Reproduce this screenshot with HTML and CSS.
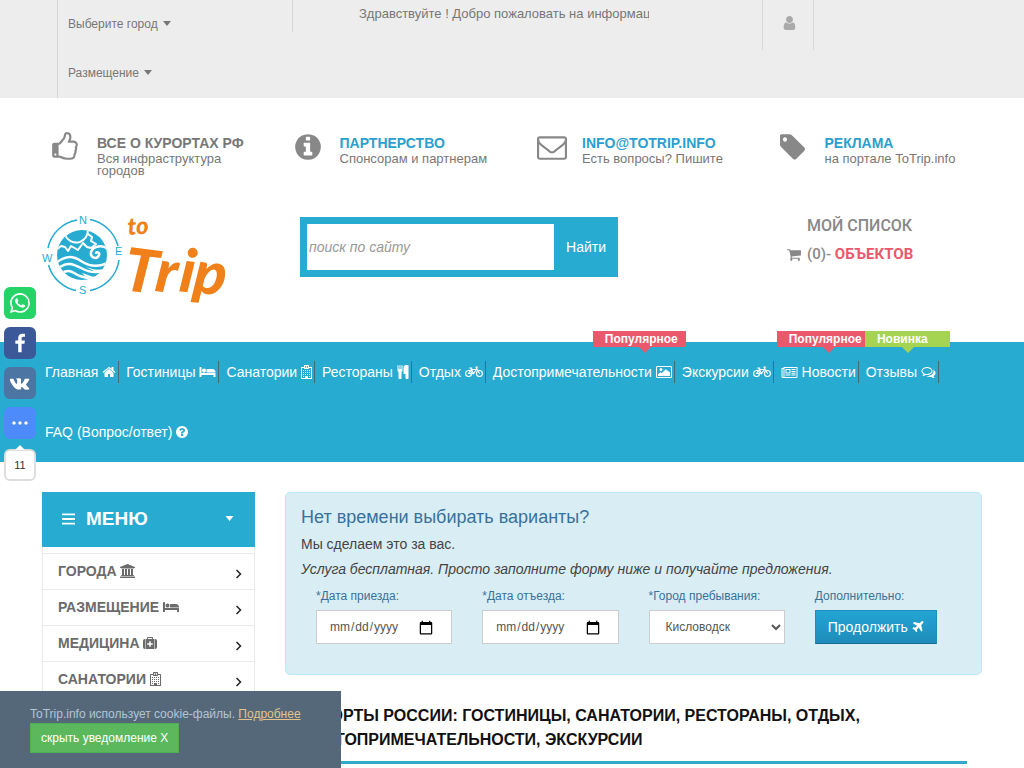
FILE: index.html
```html
<!DOCTYPE html>
<html lang="ru">
<head>
<meta charset="utf-8">
<title>ToTrip.info</title>
<link rel="stylesheet" href="styles.css">
</head>
<body>
<svg class="sprite" aria-hidden="true">
  <symbol id="home" viewBox="64 0 1664 1792"><path d="M1472 992v480q0 26-19 45t-45 19h-384v-384h-256v384h-384q-26 0-45-19t-19-45v-480q0-1 .5-3t.5-3l575-474 575 474q1 2 1 6zm223-69l-62 74q-8 9-21 11h-3q-13 0-21-7l-692-577-692 577q-12 8-24 7-13-2-21-11l-62-74q-8-10-7-23.5t11-21.5l719-599q32-26 76-26t76 26l244 204v-195q0-14 9-23t23-9h192q14 0 23 9t9 23v408l219 182q10 8 11 21.5t-7 23.5z"/></symbol>
  <symbol id="bed" viewBox="0 0 2048 1792"><path d="M256 1024h1728q26 0 45 19t19 45v448h-256v-256h-1536v256h-256v-1216q0-26 19-45t45-19h128q26 0 45 19t19 45v704zm576-320q0-106-75-181t-181-75-181 75-75 181 75 181 181 75 181-75 75-181zm1216 256v-64q0-159-112.5-271.5t-271.5-112.5h-704q-26 0-45 19t-19 45v384h1152z"/></symbol>
  <symbol id="hospital" viewBox="0 0 1408 1792"><path fill-rule="evenodd" d="M64 256h320V64q0-64 64-64h512q64 0 64 64v192h320q64 0 64 64v1408q0 64-64 64H64q-64 0-64-64V320q0-64 64-64zm64 128v1280h384v-256h384v256h384V384h-256v32q0 96-96 96H480q-96 0-96-96v-32zM512 128v256h384V128zM640 160h128v64h64v96h-64v64H640v-64h-64v-96h64zM256 640h128v128H256zm256 0h128v128H512zm256 0h128v128H768zm256 0h128v128h-128zM256 896h128v128H256zm256 0h128v128H512zm256 0h128v128H768zm256 0h128v128h-128zM256 1152h128v128H256zm256 0h128v128H512zm256 0h128v128H768zm256 0h128v128h-128zM256 1408h128v128H256zm768 0h128v128h-128z"/></symbol>
  <symbol id="cutlery" viewBox="192 0 1408 1792"><path d="M832 64v640q0 61-35.500 111t-92.500 70v779q0 52-38 90t-90 38h-128q-52 0-90-38t-38-90v-779q-57-20-92.500-70t-35.500-111v-640q0-26 19-45t45-19 45 19 19 45v416q0 26 19 45t45 19 45-19 19-45v-416q0-26 19-45t45-19 45 19 19 45v416q0 26 19 45t45 19 45-19 19-45v-416q0-26 19-45t45-19 45 19 19 45zm768 0v1600q0 52-38 90t-90 38h-128q-52 0-90-38t-38-90v-512h-224q-13 0-22.500-9.500t-9.500-22.500v-800q0-132 94-226t226-94h256q26 0 45 19t19 45z"/></symbol>
  <symbol id="bicycle" viewBox="0 0 2304 1792"><g fill="none" stroke="currentColor" stroke-width="150" stroke-linejoin="round" stroke-linecap="round"><circle cx="460" cy="1088" r="380"/><circle cx="1844" cy="1088" r="380"/><path d="M448 1088L800 576H1480L1060 1088ZM1060 1088L740 384M600 384H870M1856 1088L1400 256H1630"/></g><circle cx="1060" cy="1088" r="130"/></symbol>
  <symbol id="image" viewBox="0 0 2048 1792"><path fill-rule="evenodd" d="M160 128h1728q160 0 160 160v1216q0 160-160 160H160Q0 1664 0 1504V288q0-160 160-160zm0 128q-32 0-32 32v1216q0 32 32 32h1728q32 0 32-32V288q0-32-32-32zM832 576a192 192 0 1 1-384 0a192 192 0 1 1 384 0zM1792 960v448H256v-192l320-320 160 160 512-512z"/></symbol>
  <symbol id="news" viewBox="0 0 2048 1792"><path fill-rule="evenodd" d="M256 256h1792v1216q0 192-192 192H192Q0 1664 0 1472V384h256zM128 512v960q0 64 64 64t64-64V512zm256-128v1088q0 34-10 64h1482q64 0 64-64V384zM512 512h640v576H512zm128 128v320h384V640zM512 1216h640v128H512zm768-704h512v128h-512zm0 256h512v128h-512zm0 224h512v128h-512zm0 224h512v128h-512z"/></symbol>
  <symbol id="comments" viewBox="0 0 1792 1792"><path d="M704 384q-153 0-286 52t-211.500 141-78.500 191q0 82 53 158t149 132l97 56-35 84q34-20 62-39l44-31 53 10q78 14 153 14 153 0 286-52t211.500-141 78.500-191-78.500-191-211.500-141-286-52zm0-128q191 0 353.500 68.500t256.500 186.500 94 257-94 257-256.500 186.500-353.500 68.500q-86 0-176-16-124 88-278 128-36 9-86 16h-3q-11 0-20.500-8t-11.500-21q-1-3-1-6.500t.5-6.500 2-6l2.500-5 3.500-5.500 4-5 4.500-5 4-4.500q5-6 23-25t26-29.500 22.500-29 25-38.500 20.500-44q-124-72-195-177t-71-224q0-139 94-257t256.500-186.500 353.500-68.500zm822 1169q10 24 20.500 44t25 38.500 22.500 29 26 29.500 23 25q1 1 4 4.500t4.500 5 4 5 3.500 5.500l2.500 5 2 6 .5 6.500-1 6.500q-3 14-13 22t-22 7q-50-7-86-16-154-40-278-128-90 16-176 16-271 0-472-132 58 4 88 4 161 0 309-45t264-129q125-92 192-212t67-254q0-77-23-152 129 71 204 178t75 230q0 120-71 224.500t-195 176.500z"/></symbol>
  <symbol id="question" viewBox="128 0 1536 1792"><path d="M1024 1376v-192q0-14-9-23t-23-9h-192q-14 0-23 9t-9 23v192q0 14 9 23t23 9h192q14 0 23-9t9-23zm256-672q0-88-55.500-163t-138.500-116-170-41q-243 0-371 213-15 24 8 42l132 100q7 6 19 6 16 0 25-12 53-68 86-92 34-24 86-24 48 0 85.500 26t37.500 59q0 38-20 61t-68 45q-63 28-115.500 86.500t-52.500 125.500v36q0 14 9 23t23 9h192q14 0 23-9t9-23q0-19 21.500-49.500t54.500-49.500q32-18 49-28.500t46-35 44.500-48 28-60.500 12.500-81zm384 192q0 209-103 385.500t-279.500 279.500-385.500 103-385.500-103-279.500-279.500-103-385.500 103-385.500 279.500-279.500 385.500-103 385.500 103 279.500 279.500 103 385.500z"/></symbol>
  <symbol id="info" viewBox="128 0 1536 1792"><path d="M1152 1376v-160q0-14-9-23t-23-9h-96v-512q0-14-9-23t-23-9h-320q-14 0-23 9t-9 23v160q0 14 9 23t23 9h96v320h-96q-14 0-23 9t-9 23v160q0 14 9 23t23 9h448q14 0 23-9t9-23zm-128-896v-160q0-14-9-23t-23-9h-192q-14 0-23 9t-9 23v160q0 14 9 23t23 9h192q14 0 23-9t9-23zm640 416q0 209-103 385.500t-279.500 279.500-385.500 103-385.500-103-279.500-279.500-103-385.500 103-385.500 279.500-279.500 385.500-103 385.500 103 279.500 279.500 103 385.500z"/></symbol>
  <symbol id="thumb" viewBox="128 0 1536 1792"><path d="M384 1344q0-26-19-45t-45-19-45 19-19 45 19 45 45 19 45-19 19-45zm1152-576q0-51-39-89.500t-89-38.500h-352q0-58 48-159.500t48-160.500q0-98-32-145t-128-47q-26 26-38 85t-30.500 125.500-59.500 109.500q-22 23-77 91-4 5-23 30t-31.500 41-34.500 42.500-40 44-38.500 35.500-40 27-35.500 9h-32v640h32q13 0 31.500 3t33 6.500 38 11 35 11.500 35.500 12.500 29 10.500q211 73 342 73h121q192 0 192-167 0-26-5-56 30-16 47.500-52.500t17.500-73.500-18-69q53-50 53-119 0-25-10-55.500t-25-47.500q32-1 53.500-47t21.500-81zm128-1q0 89-49 163 9 33 9 69 0 77-38 144 3 21 3 43 0 101-60 178 1 139-85 219.500t-227 80.500h-129q-96 0-189.500-22.500t-216.500-65.500q-116-40-138-40h-288q-53 0-90.500-37.500t-37.500-90.500v-640q0-53 37.500-90.500t90.500-37.500h274q36-24 137-155 58-75 107-128 24-25 35.500-85.500t30.500-126.500 62-108q39-37 90-37 84 0 151 32.500t102 101.500 35 186q0 93-48 192h176q104 0 180 76t76 179z"/></symbol>
  <symbol id="envelope" viewBox="0 0 1792 1792"><path d="M1664 1504v-768q-32 36-69 66-268 206-426 338-51 43-83 67t-86.500 48.500-102.500 24.500h-2q-48 0-102.500-24.500t-86.500-48.500-83-67q-158-132-426-338-37-30-69-66v768q0 13 9.500 22.500t22.500 9.500h1472q13 0 22.500-9.500t9.500-22.500zm0-1051v-24.500l-.5-13-3-12.500-5.500-9-9-7.500-14-2.500h-1472q-13 0-22.500 9.500t-9.500 22.500q0 168 147 284 193 152 401 317 6 5 35 29.500t46 37.500 44.500 31.500 50.500 27.500 43 9h2q20 0 43-9t50.500-27.500 44.500-31.500 46-37.500 35-29.500q208-165 401-317 54-43 100.500-115.500t46.500-131.500zm128-37v1088q0 66-47 113t-113 47h-1472q-66 0-113-47t-47-113v-1088q0-66 47-113t113-47h1472q66 0 113 47t47 113z"/></symbol>
  <symbol id="tag" viewBox="192 0 1472 1792"><path d="M576 448q0-53-37.500-90.500t-90.500-37.500-90.500 37.500-37.500 90.500 37.500 90.500 90.500 37.500 90.500-37.500 37.500-90.500zm1067 576q0 53-37 90l-491 492q-39 37-91 37-53 0-90-37l-715-716q-38-37-64.500-101t-26.500-117v-416q0-52 38-90t90-38h416q53 0 117 26.500t102 64.500l715 714q37 39 37 91z"/></symbol>
  <symbol id="user" viewBox="256 128 1280 1536"><path d="M1536 1399q0 109-62.500 187t-150.500 78h-854q-88 0-150.500-78t-62.500-187q0-85 8.500-160.500t31.500-152 58.500-131 94-89 134.500-34.500q131 128 313 128t313-128q76 0 134.500 34.500t94 89 58.500 131 31.500 152 8.500 160.500zm-256-887q0 159-112.500 271.500t-271.500 112.500-271.500-112.500-112.500-271.500 112.500-271.500 271.500-112.500 271.500 112.500 112.500 271.500z"/></symbol>
  <symbol id="cart" viewBox="64 0 1664 1792"><path d="M704 1536q0 52-38 90t-90 38-90-38-38-90 38-90 90-38 90 38 38 90zm896 0q0 52-38 90t-90 38-90-38-38-90 38-90 90-38 90 38 38 90zm128-1088v512q0 24-16.500 42.500t-40.500 21.500l-1044 122q13 60 13 70 0 16-24 64h920q26 0 45 19t19 45-19 45-45 19h-1024q-26 0-45-19t-19-45q0-11 8-31.500t16-36 21.500-40 15.500-29.500l-177-823h-204q-26 0-45-19t-19-45 19-45 45-19h256q16 0 28.500 6.500t19.500 15.500 13 24.500 8 26 5.500 29.500 4.500 26h1201q26 0 45 19t19 45z"/></symbol>
  <symbol id="plane" viewBox="160 0 1472 1792"><path d="M1568 160q44 52 12 148t-108 172l-161 161 160 696q5 19-12 33l-128 96q-7 6-19 6-4 0-7-1-15-3-21-16l-279-508-259 259 53 194q5 17-8 31l-96 96q-9 9-23 9h-2q-15-2-24-13l-189-252-252-189q-11-7-13-23-1-13 9-25l96-97q9-9 23-9 6 0 8 1l194 53 259-259-508-279q-14-8-17-24-2-16 9-27l128-128q14-13 30-8l665 159 160-160q76-76 172-108t148 12z"/></symbol>
  <symbol id="bank" viewBox="0 0 1920 1792"><path d="M960 0l960 384v128h-128q0 26-20.500 45t-48.500 19h-1526q-28 0-48.500-19t-20.500-45h-128v-128zm-704 640h256v768h128v-768h256v768h128v-768h256v768h128v-768h256v768h59q28 0 48.500 19t20.500 45v64h-1664v-64q0-26 20.500-45t48.500-19h59v-768zm1595 960q28 0 48.500 19t20.500 45v128h-1920v-128q0-26 20.500-45t48.500-19h1782z"/></symbol>
  <symbol id="medkit" viewBox="0 0 1792 1792"><path fill-rule="evenodd" d="M512 384V224q0-96 96-96h576q96 0 96 96v160h128v1280H384V384zm128 0h512V256H640zm160 288v256H544v192h256v256h192v-256h256V928H992V672zM320 384v1280h-96q-224 0-224-224V608q0-224 224-224zM1792 608v832q0 224-224 224h-96V384h96q224 0 224 224z"/></symbol>
  <symbol id="bars" viewBox="0 0 14 12"><path d="M0 0h14v2H0zM0 5h14v2H0zM0 10h14v2H0z"/></symbol>
  <symbol id="caret" viewBox="0 0 8 5"><path d="M0 0h8L4 5z"/></symbol>
  <symbol id="chevron" viewBox="0 0 6 10"><path fill="none" stroke="currentColor" stroke-width="1.500" d="M1 1l4 4-4 4"/></symbol>
  <symbol id="whatsapp" viewBox="0 0 16 16"><path d="M13.601 2.326A7.850 7.850 0 0 0 7.994 0C3.627 0 .068 3.558.064 7.926c0 1.399.366 2.760 1.057 3.965L0 16l4.204-1.102a7.900 7.900 0 0 0 3.790.965h.004c4.368 0 7.926-3.558 7.930-7.930A7.900 7.900 0 0 0 13.600 2.326zM7.994 14.521a6.600 6.600 0 0 1-3.356-.920l-.240-.144-2.494.654.666-2.433-.156-.251a6.560 6.560 0 0 1-1.007-3.505c0-3.626 2.957-6.584 6.591-6.584a6.560 6.560 0 0 1 4.660 1.931 6.560 6.560 0 0 1 1.928 4.660c-.004 3.639-2.961 6.592-6.592 6.592m3.615-4.934c-.197-.099-1.170-.578-1.353-.646-.182-.065-.315-.099-.445.099-.133.197-.513.646-.627.775-.114.133-.232.148-.430.050-.197-.100-.836-.308-1.592-.985-.590-.525-.985-1.175-1.103-1.372-.114-.198-.011-.304.088-.403.087-.088.197-.232.296-.346.100-.114.133-.198.198-.330.065-.134.034-.248-.015-.347-.050-.099-.445-1.076-.612-1.470-.160-.389-.323-.335-.445-.340-.114-.007-.247-.007-.380-.007a.730.730 0 0 0-.529.247c-.182.198-.691.677-.691 1.654s.710 1.916.810 2.049c.098.133 1.394 2.132 3.383 2.992.470.205.840.326 1.129.418.475.152.904.129 1.246.080.380-.058 1.171-.480 1.338-.943.164-.464.164-.860.114-.943-.049-.084-.182-.133-.380-.232"/></symbol>
  <symbol id="facebook" viewBox="0 0 1792 1664"><path d="M1343 12v264h-157q-86 0-116 36t-30 108v189h293l-39 296h-254v759h-306v-759h-255v-296h255v-218q0-186 104-288.500t277-102.500q147 0 228 12z"/></symbol>
  <symbol id="vk" viewBox="0 0 1920 1792"><path d="M1853 520q23 64-150 294-24 32-65 85-78 100-90 131-17 41 14 81 17 21 81 82h1l1 1 1 1 2 2q141 131 191 221 3 5 6.500 12.500t7 26.500-.5 34-25 27.500-59 12.500l-256 4q-24 5-56-5t-52-22l-20-12q-30-21-70-64t-68.500-77.500-61-58-56.500-15.500q-3 1-8 3.500t-17 14.500-21.500 29.500-17 52-6.500 77.500q0 15-3.500 27.500t-7.500 18.500l-4 5q-18 19-53 22h-115q-71 4-146-16.500t-131.500-53-103-66-70.500-57.500l-25-24q-10-10-27.500-30t-71.500-91-106-151-122.500-211-130.500-272q-6-16-6-27t3-16l4-6q15-19 57-19l274-2q12 2 23 6.500t16 8.500l5 3q16 11 24 32 20 50 46 103.500t41 81.500l16 29q29 60 56 104t48.500 68.500 41.500 38.500 34 14 27-5q2-1 5-5t12-22 13.500-47 9.500-81 0-125q-2-40-9-73t-14-46l-6-12q-25-34-85-43-13-2 5-24 16-19 38-30 53-26 239-24 82 1 135 13 20 5 33.500 13.500t20.500 24 10.500 32 3.500 45.500-1 55-2.500 70.500-1.500 82.500q0 11-1 42t-.5 48 3.500 40.500 11.500 39 22.500 24.500q8 2 17 4t26-11 38-34.500 52-67 68-107.500q60-104 107-225 4-10 10-17.500t11-10.500l4-3 5-2.500 13-3 20-.5 288-2q39-5 64 2.500t31 16.500z"/></symbol>
  <symbol id="dots" viewBox="0 0 16 4"><circle cx="2" cy="2" r="1.700"/><circle cx="8" cy="2" r="1.700"/><circle cx="14" cy="2" r="1.700"/></symbol>
</svg>

<div class="topbar">
  <div class="container topbar-row">
    <ul class="top-links">
      <li><a href="#">Выберите город <svg class="caret"><use href="#caret"/></svg></a></li>
      <li><a href="#">Размещение <svg class="caret"><use href="#caret"/></svg></a></li>
    </ul>
    <div class="ticker"><p>Здравствуйте ! Добро пожаловать на информационный портал</p></div>
    <a class="account" href="#" aria-label="Личный кабинет"><svg><use href="#user"/></svg></a>
  </div>
</div>

<header class="container">
  <div class="features">
    <div class="feature"><span class="feature-icon"><svg class="sq"><use href="#thumb"/></svg></span><div><h3>ВСЕ О КУРОРТАХ РФ</h3><p>Вся инфраструктура городов</p></div></div>
    <div class="feature"><span class="feature-icon"><svg class="sq"><use href="#info"/></svg></span><div><h3><a href="#">ПАРТНЕРСТВО</a></h3><p>Спонсорам и партнерам</p></div></div>
    <div class="feature"><span class="feature-icon"><svg class="wide"><use href="#envelope"/></svg></span><div><h3><a href="#">INFO@TOTRIP.INFO</a></h3><p>Есть вопросы? Пишите</p></div></div>
    <div class="feature"><span class="feature-icon"><svg class="sq"><use href="#tag"/></svg></span><div><h3><a href="#">РЕКЛАМА</a></h3><p>на портале ToTrip.info</p></div></div>
  </div>
  <div class="brand-row">
    <a class="logo" href="#" aria-label="toTrip">
      <svg viewBox="0 0 182 94" width="182" height="94">
        <clipPath id="globe"><circle cx="40" cy="38" r="25"/></clipPath>
        <path fill="none" stroke="#27abd0" stroke-width="1.500" d="M48 2.500A36 36 0 0 1 76 29M77 43A36 36 0 0 1 48 73.500M34 73.500A36 36 0 0 1 6.500 48M6 31A36 36 0 0 1 35 3"/>
        <g class="compass"><text x="37" y="7">N</text><text x="73" y="38">E</text><text x="37" y="77">S</text><text x="0" y="45">W</text></g>
        <g clip-path="url(#globe)">
          <path fill="#27abd0" d="M10 8H70V50C58 54 52 53 44 50C54 56 60 56 67 53V70H10Z"/>
          <path fill="#fff" d="M70 55C60 61 52 61 46 58L40 56C45 62 50 63 55 62V70H70ZM38 64C30 65 26 62 22 56C18 54 14 56 12 60V70H40Z"/>
          <g fill="none" stroke="#fff" stroke-linecap="round" stroke-linejoin="round">
            <path stroke-width="2" d="M14 33L19 29 23 30 26 34 29 29 36 33 41 26 45 30 49 31 54 27 49 24 50 20 46 17M23 18C25 23 31 27 38 25C45 22 46 17 46 12"/>
            <path stroke-width="2.500" d="M67 33C61 27 51 29 49 35C48 41 55 43 57 38C58 36 55 34 54 36"/>
            <path stroke-width="2.500" d="M14 46C24 38 31 39 39 44C48 50 58 50 67 45M15 52C25 44 31 47 39 51C48 56 57 57 67 51M19 57C27 50 32 57 38 59S46 62 52 61"/>
          </g>
        </g>
        <g class="wordmark"><text x="86" y="18" class="to" transform="rotate(-4 86 18)">to</text><text x="80 112 136 150" y="73 74 74 75" rotate="7" class="trip">Trip</text></g>
      </svg>
    </a>
    <form class="search">
      <input type="search" placeholder="поиск по сайту" aria-label="поиск по сайту">
      <button type="button">Найти</button>
    </form>
    <div class="my-list">
      <h2>МОЙ СПИСОК</h2>
      <svg><use href="#cart"/></svg>
      <p>(0)- <a href="#">ОБЪЕКТОВ</a></p>
    </div>
  </div>
</header>

<nav class="main-nav">
  <ul class="container">
    <li><a href="#">Главная <svg class="i14"><use href="#home"/></svg></a></li>
    <li><a href="#">Гостиницы <svg class="i17"><use href="#bed"/></svg></a></li>
    <li><a href="#">Санатории <svg class="i11"><use href="#hospital"/></svg></a></li>
    <li><a href="#">Рестораны <svg class="i12"><use href="#cutlery"/></svg></a></li>
    <li><a href="#">Отдых <svg class="i18"><use href="#bicycle"/></svg></a></li>
    <li><a href="#">Достопримечательности <svg class="i16"><use href="#image"/></svg></a><span class="flag">Популярное</span></li>
    <li><a href="#">Экскурсии <svg class="i18"><use href="#bicycle"/></svg></a></li>
    <li><a href="#"><svg class="i17"><use href="#news"/></svg> Новости</a><span class="flag">Популярное</span></li>
    <li><a href="#">Отзывы <svg class="i15"><use href="#comments"/></svg></a><span class="flag new">Новинка</span></li>
    <li class="last"><a href="#">FAQ (Вопрос/ответ) <svg class="i12"><use href="#question"/></svg></a></li>
  </ul>
</nav>

<div class="container content">
  <aside class="sidebar">
    <button class="menu-head" type="button"><svg class="bars"><use href="#bars"/></svg><span>МЕНЮ</span><svg class="caret"><use href="#caret"/></svg></button>
    <ul class="menu">
      <li><a href="#"><span>ГОРОДА <svg class="i15"><use href="#bank"/></svg></span><svg class="chev"><use href="#chevron"/></svg></a></li>
      <li><a href="#"><span>РАЗМЕЩЕНИЕ <svg class="i16"><use href="#bed"/></svg></span><svg class="chev"><use href="#chevron"/></svg></a></li>
      <li><a href="#"><span>МЕДИЦИНА <svg class="i14"><use href="#medkit"/></svg></span><svg class="chev"><use href="#chevron"/></svg></a></li>
      <li><a href="#"><span>САНАТОРИИ <svg class="i11"><use href="#hospital"/></svg></span><svg class="chev"><use href="#chevron"/></svg></a></li>
    </ul>
  </aside>
  <main>
    <section class="request">
      <h2>Нет времени выбирать варианты?</h2>
      <p>Мы сделаем это за вас.</p>
      <p><em>Услуга бесплатная. Просто заполните форму ниже и получайте предложения.</em></p>
      <form class="fields">
        <div class="field"><label for="arrive">*Дата приезда:</label><input type="date" id="arrive"></div>
        <div class="field"><label for="leave">*Дата отъезда:</label><input type="date" id="leave"></div>
        <div class="field"><label for="city">*Город пребывания:</label><select id="city"><option>Кисловодск</option></select></div>
        <div class="field"><label for="go">Дополнительно:</label><button type="button" id="go">Продолжить <svg class="i12"><use href="#plane"/></svg></button></div>
      </form>
    </section>
    <h1>КУРОРТЫ РОССИИ: ГОСТИНИЦЫ, САНАТОРИИ, РЕСТОРАНЫ, ОТДЫХ, ДОСТОПРИМЕЧАТЕЛЬНОСТИ, ЭКСКУРСИИ</h1>
  </main>
</div>

<div class="share">
  <a class="wa" href="#" aria-label="WhatsApp"><svg><use href="#whatsapp"/></svg></a>
  <a class="fb" href="#" aria-label="Facebook"><svg><use href="#facebook"/></svg></a>
  <a class="vk" href="#" aria-label="VK"><svg><use href="#vk"/></svg></a>
  <a class="more" href="#" aria-label="Ещё"><svg><use href="#dots"/></svg></a>
  <span class="count">11</span>
</div>

<div class="cookie">
  <p>ToTrip.info использует cookie-файлы. <a href="#">Подробнее</a></p>
  <button type="button">скрыть уведомление X</button>
</div>
</body>
</html>
```

FILE: styles.css
```css
* { box-sizing: border-box; }
html { overflow: hidden; }
body {
  margin: 0;
  height: 100vh;
  overflow: hidden;
  background: #fff;
  color: #777;
  font: 14px/20px "Liberation Sans", Arial, sans-serif;
}
h1, h2, h3, p, ul { margin: 0; padding: 0; }
ul { list-style: none; }
a { color: inherit; text-decoration: none; }
button, input, select { font-family: inherit; }
svg { fill: currentColor; }
.sprite { position: absolute; width: 0; height: 0; }
.container { max-width: 970px; margin: 0 auto; padding: 0 15px; }
.caret { width: 8px; height: 5px; }

/* top bar */
.topbar { background: #ededed; }
.topbar-row { display: flex; align-items: flex-start; padding: 0 30px; font-size: 12px; }
.top-links { width: 235px; padding-left: 10px; border-left: 1px solid #d6d6d6; }
.top-links a { display: block; line-height: 49px; }
.top-links .caret { margin: 0 0 2px 2px; }
.ticker { width: 357px; height: 32px; padding-left: 66px; border-left: 1px solid #d6d6d6; font-size: 13px; line-height: 28px; }
.ticker p { overflow: hidden; white-space: nowrap; }
.account { display: flex; justify-content: center; margin-left: 113px; width: 52px; height: 50px; padding: 16px 0 0 2px; border: solid #d6d6d6; border-width: 0 1px; color: #aaa; }
.account svg { width: 13px; height: 14px; }

/* header */
.features { display: grid; grid-template-columns: repeat(4, 1fr); margin: 0 -15px; padding-top: 34px; height: 119px; }
.feature { display: flex; padding: 0 15px 0 25px; }
.feature-icon { flex: none; width: 45px; color: #888; }
.feature-icon svg { display: block; height: 30px; }
.feature-icon .sq { width: 26px; }
.feature-icon .wide { width: 30px; }
.feature h3 { margin-bottom: -1px; font-size: 14px; line-height: 22px; white-space: nowrap; }
.feature h3 a { color: #2a9fd0; }
.feature p { font-size: 13px; line-height: 12px; }
.brand-row { display: flex; align-items: flex-start; height: 125px; }
.logo { width: 258px; }
.logo svg { display: block; overflow: visible; }
.compass { fill: #27abd0; font-size: 11px; }
.wordmark { fill: #f08019; font-family: Lato, sans-serif; font-style: italic; font-weight: 900; }
.to { font-size: 24px; }
.trip { font-size: 60px; }
.search { display: flex; width: 318px; height: 60px; padding: 7px 0 7px 7px; background: #27abd0; }
.search input { width: 247px; padding: 0 2px; border: 0; border-radius: 0; background: #fff; font-size: 14px; font-style: italic; }
.search input::placeholder { color: #999; }
.search button { flex: 1; border: 0; background: none; color: #fff; font-size: 14px; }
.my-list { display: grid; grid-template-columns: 14px auto; column-gap: 6px; align-items: center; margin-left: 169px; color: #888; font-family: Roboto, sans-serif; font-weight: 500; }
.my-list h2 { grid-column: 2; font-size: 16px; font-weight: 500; line-height: 18px; padding-bottom: 9px; }
.my-list p { font-size: 15px; }
.my-list a { color: #e9596b; font-weight: 700; }
.my-list svg { width: 14px; height: 15px; }

/* navigation */
.main-nav { background: #27abd0; color: #fff; }
.main-nav ul { display: flex; flex-wrap: wrap; }
.main-nav li { position: relative; height: 60px; padding: 19px 4px 0 3px; }
.main-nav li > a { display: block; padding-right: 2px; border-right: 1px solid #4a6a78; line-height: 22px; white-space: nowrap; }
.main-nav li.last > a { border: 0; }
.main-nav svg, .menu svg, .field svg { height: 14px; vertical-align: -2px; }
.i11 { width: 11px; }
.i12 { width: 12px; }
.i14 { width: 14px; }
.i15 { width: 15px; }
.i16 { width: 16px; }
.i17 { width: 17px; }
.i18 { width: 18px; }
.flag { position: absolute; top: -11px; right: -7px; width: 93px; height: 16px; padding-left: 12px; background: #e9596b; font-size: 12px; font-weight: 700; line-height: 16px; }
.flag::after { content: ""; position: absolute; top: 16px; left: 50%; border: 6px solid transparent; border-top-color: #e9596b; border-bottom: 0; }
.flag.new { width: 85px; background: #a5d352; }
.flag.new::after { border-top-color: #a5d352; margin-left: -5px; }

/* content */
.content { display: flex; gap: 30px; padding-top: 30px; }
.sidebar { flex: none; width: 213px; }
.menu-head { display: flex; align-items: center; width: 100%; height: 55px; padding: 0 21px 2px 20px; border: 0; background: #27abd0; color: #fff; font-size: 19px; font-weight: 700; }
.menu-head .bars { width: 13px; height: 12px; margin-right: 11px; }
.menu-head .caret { width: 9px; margin-left: auto; }
.menu { border: solid #eaeaea; border-width: 0 1px; padding-top: 6px; }
.menu a { display: flex; justify-content: space-between; align-items: center; height: 36px; padding: 0 12px 2px 15px; border-top: 1px solid #eaeaea; color: #6b6b6b; font-weight: 700; }
.menu .chev { width: 7px; height: 10px; margin-top: 7px; color: #222; }
main { flex: 1; min-width: 0; }
.request { height: 183px; padding: 12px 15px; border: 1px solid #bce8f1; border-radius: 5px; background: #d9edf5; color: #444; }
.request h2 { color: #39719a; font-size: 18px; font-weight: 400; line-height: 24px; }
.request p { line-height: 25px; }
.request h2 + p { padding-top: 3px; }
.fields { display: grid; grid-template-columns: repeat(4, minmax(0, 1fr)); padding-top: 4px; }
.field { padding: 0 15px; }
.field label { display: block; margin-bottom: 4px; color: #39719a; font-size: 12px; line-height: 20px; }
.field input, .field select { display: block; width: 100%; height: 34px; padding: 6px 12px; border: 1px solid #ccc; border-radius: 0; background-color: #fff; color: #555; font-size: 12px; }
.field input::-webkit-calendar-picker-indicator { width: 22px; height: 15px; background-size: contain; background-repeat: no-repeat; background-position: center; }
.field select { padding: 6px 0 6px 12px; }
.field button { height: 34px; padding: 0 12px; border: 1px solid #1d8fbd; border-bottom-color: #176b90; background: linear-gradient(#23a5d4, #1e8cba); color: #fff; font-size: 14px; white-space: nowrap; }
h1 { margin: 29px 15px 0; padding-bottom: 9px; border-bottom: 3px solid #30aac6; color: #111; font-size: 16px; line-height: 24px; }

/* share buttons */
.share { position: fixed; left: 4px; top: 287px; display: flex; flex-direction: column; gap: 8px; }
.share a, .count { display: flex; align-items: center; justify-content: center; width: 32px; height: 32px; border-radius: 6px; color: #fff; }
.share svg { width: 20px; height: 20px; }
.wa { background: #25d366; }
.fb { background: #3b5998; }
.vk { background: #4c75a3; }
.more { background: #4c8bf9; }
.share .more svg { height: 4px; width: 16px; }
.share .count { position: relative; margin-top: 2px; border: 2px solid #ddd; background: #fff; color: #333; font-size: 11px; }
.count::before { content: ""; position: absolute; top: -6px; border: 5px solid transparent; border-bottom-color: #fff; border-top: 0; }

/* cookie notice */
.cookie { position: fixed; left: 0; bottom: 0; width: 341px; padding: 14px 30px 15px; background: #54687a; color: #b5c4d4; font-size: 12px; line-height: 18px; white-space: nowrap; }
.cookie a { color: #e0c48c; text-decoration: underline; }
.cookie button { display: block; height: 30px; padding: 0 10px; border: 1px solid #52ae52; background: #5cb85c; color: #fff; font-size: 12px; }
```
